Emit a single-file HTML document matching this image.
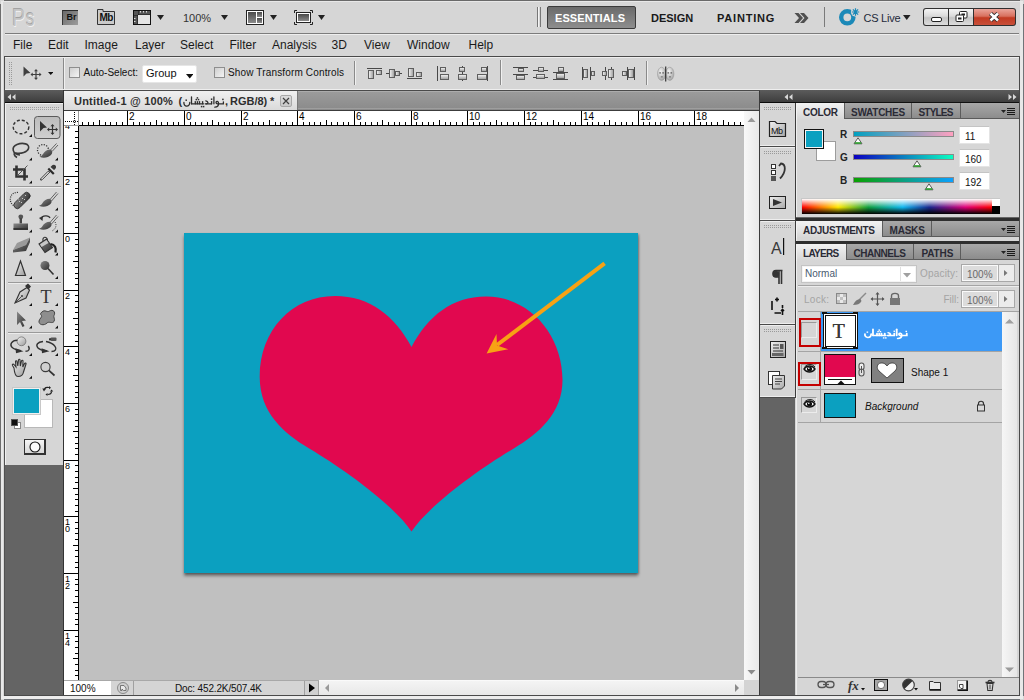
<!DOCTYPE html><html><head><meta charset="utf-8"><style>
*{margin:0;padding:0;box-sizing:border-box}
html,body{width:1024px;height:700px;overflow:hidden;background:#d6d6d6;position:relative;font-family:"Liberation Sans",sans-serif}
div,svg{position:absolute}
.t{white-space:nowrap;line-height:1}
</style></head><body>
<div style="left:0px;top:0px;width:1024px;height:700px;background:#d6d6d6"></div>
<div style="left:4px;top:0px;width:1016px;height:1px;background:#6a6a6a"></div>
<div style="left:0px;top:4px;width:1px;height:696px;background:#6e6e6e"></div>
<div style="left:1023px;top:4px;width:1px;height:692px;background:#707478"></div>
<div style="left:4px;top:699px;width:1016px;height:1px;background:#707478"></div>
<div style="left:1px;top:1px;width:1022px;height:1px;background:#e8e8e8"></div>
<div style="left:1px;top:1px;width:2px;height:698px;background:#e8e8e8"></div>
<div style="left:1020px;top:1px;width:3px;height:698px;background:#e8e8e8"></div>
<div style="left:1px;top:696px;width:1022px;height:3px;background:#ececec"></div>
<div class="t" style="left:12.3px;top:7.4px;font-size:23px;transform:scaleX(0.86);color:#c4c4c4;text-shadow:-0.6px -0.6px 0 #a2a2a2,0.6px 0.8px 0 #f2f2f2;transform-origin:0 0">P</div>
<div class="t" style="left:26.3px;top:6.3px;font-size:24px;transform:scaleX(0.7);color:#c4c4c4;text-shadow:-0.6px -0.6px 0 #a2a2a2,0.6px 0.8px 0 #f2f2f2;transform-origin:0 0">s</div>
<div style="left:62px;top:10px;width:16px;height:15px;background:linear-gradient(135deg,#6a6a6a,#9c9c9c);border-top:1px solid #2a2a2a;border-left:1px solid #3a3a3a"></div>
<div class="t" style="left:66.5px;top:13.33px;font-size:9px;font-weight:bold;color:#111">Br</div>
<svg style="left:96px;top:8px" width="20" height="18"><path d="M1.5 16.5 V1.5 H7 V3.5 H18.5 V16.5 Z" fill="#cacaca" stroke="#333" stroke-width="1"/></svg>
<div class="t" style="left:99.5px;top:12.70px;font-size:10px;font-weight:bold;color:#111;letter-spacing:-0.6px">Mb</div>
<svg style="left:133px;top:10px" width="18" height="15"><rect x="0" y="0" width="18" height="15" fill="#111"/><rect x="1" y="1" width="4" height="4" fill="#555"/><rect x="5.5" y="1" width="11.5" height="3.5" fill="#555"/><rect x="1" y="5.5" width="3.5" height="8.5" fill="#555"/><rect x="5" y="5" width="12" height="9" fill="#e4e4e4"/>
<rect x="7" y="1" width="1" height="1.5" fill="#ddd"/><rect x="10" y="1" width="1" height="1.5" fill="#ddd"/><rect x="13" y="1" width="1" height="1.5" fill="#ddd"/><rect x="1" y="8" width="1.5" height="1" fill="#ddd"/><rect x="1" y="11" width="1.5" height="1" fill="#ddd"/></svg>
<svg style="left:157px;top:15px" width="7" height="5"><path d="M0 0 H7 L3.5 5 Z" fill="#222"/></svg>
<div class="t" style="left:183px;top:12.57px;font-size:11px;color:#333">100%</div>
<svg style="left:220.5px;top:15px" width="7" height="5"><path d="M0 0 H7 L3.5 5 Z" fill="#222"/></svg>
<svg style="left:246px;top:10px" width="18" height="15"><rect x="0.5" y="0.5" width="17" height="14" fill="#fff" stroke="#222"/><defs><linearGradient id="g1" x1="0" y1="0" x2="0" y2="1"><stop offset="0" stop-color="#4a4a4a"/><stop offset="1" stop-color="#8a8a8a"/></linearGradient></defs><rect x="2" y="2" width="8" height="11" fill="url(#g1)"/><rect x="11" y="2" width="5" height="5" fill="url(#g1)"/><rect x="11" y="8" width="5" height="5" fill="url(#g1)"/></svg>
<svg style="left:270px;top:15px" width="7" height="5"><path d="M0 0 H7 L3.5 5 Z" fill="#222"/></svg>
<svg style="left:294px;top:10px" width="19" height="15"><path d="M0.5 3 V0.5 H3 M16 0.5 H18.5 V3 M18.5 12 V14.5 H16 M3 14.5 H0.5 V12" fill="none" stroke="#222" stroke-width="1"/><rect x="2.5" y="2.5" width="14" height="10" fill="#fff" stroke="#222"/><rect x="4" y="4" width="11" height="7" fill="url(#g1)"/></svg>
<svg style="left:318px;top:15px" width="7" height="5"><path d="M0 0 H7 L3.5 5 Z" fill="#222"/></svg>
<div style="left:537px;top:7px;width:1px;height:20px;background:#777"></div>
<div style="left:538px;top:7px;width:1px;height:20px;background:#f4f4f4"></div>
<div style="left:540px;top:7px;width:1px;height:20px;background:#777"></div>
<div style="left:547px;top:6px;width:89px;height:23px;background:linear-gradient(#6a6a6a,#8e8e8e);border:1px solid #3a3a3a;border-radius:2px"></div>
<div class="t" style="left:555px;top:12.57px;font-size:11px;font-weight:bold;color:#fff;letter-spacing:0.1px">ESSENTIALS</div>
<div class="t" style="left:651px;top:12.57px;font-size:11px;font-weight:bold;color:#1a1a1a">DESIGN</div>
<div class="t" style="left:717px;top:12.57px;font-size:11px;font-weight:bold;color:#1a1a1a;letter-spacing:0.8px">PAINTING</div>
<svg style="left:794px;top:13px" width="16" height="11"><path d="M0.5 0 H4.5 L9 5 L4.5 10 H0.5 L5 5 Z M6 0 H10 L14.5 5 L10 10 H6 L10.5 5 Z" fill="#505050"/></svg>
<div style="left:824px;top:7px;width:1px;height:20px;background:#7a7a7a"></div>
<svg style="left:836px;top:6px" width="24" height="22"><circle cx="11.3" cy="11.3" r="6.1" fill="none" stroke="#1b89b8" stroke-width="4.4"/><circle cx="19.5" cy="6" r="4.6" fill="#d6d6d6"/><g stroke="#1b89b8" stroke-width="1.2"><path d="M19.5 2.3 V9.7 M15.8 6 H23.2 M16.9 3.4 L22.1 8.6 M22.1 3.4 L16.9 8.6"/></g></svg>
<div class="t" style="left:863.5px;top:12.57px;font-size:11px;color:#1e2a3a;letter-spacing:-0.25px">CS Live</div>
<svg style="left:903px;top:15px" width="7.5" height="5"><path d="M0 0 H7.5 L3.75 5 Z" fill="#222"/></svg>
<div style="left:923px;top:8px;width:93px;height:18px;background:#303030;border-radius:3px"></div>
<div style="left:924px;top:9px;width:24px;height:16px;background:linear-gradient(#f4f4f4,#dadada 45%,#c4c4c4 55%,#dcdcdc);border-radius:2px 0 0 2px"></div>
<div style="left:949px;top:9px;width:24px;height:16px;background:linear-gradient(#f4f4f4,#dadada 45%,#c4c4c4 55%,#dcdcdc)"></div>
<div style="left:974px;top:9px;width:41px;height:16px;background:linear-gradient(#eaa49a,#d8705e 45%,#c23a22 55%,#c8503a);border-radius:0 2px 2px 0"></div>
<div style="left:930.5px;top:17px;width:11px;height:5px;background:#fff;border:1px solid #222;border-radius:2px"></div>
<svg style="left:955px;top:11px" width="14" height="12"><rect x="4.5" y="0.5" width="7.5" height="6.5" fill="#fff" stroke="#222" rx="1"/><rect x="6.5" y="2.5" width="3.5" height="2" fill="#222"/><rect x="1" y="4" width="7.5" height="6.5" fill="#fff" stroke="#222" rx="1"/><rect x="3" y="6.5" width="3.5" height="2" fill="#222"/></svg>
<svg style="left:986px;top:10px" width="16" height="14"><path d="M4.5 3.5 L12 10.5 M12 3.5 L4.5 10.5" stroke="#2a2a2a" stroke-width="4.4" stroke-linecap="butt"/><path d="M4.5 3.5 L12 10.5 M12 3.5 L4.5 10.5" stroke="#fff" stroke-width="2.6" stroke-linecap="butt"/></svg>
<div style="left:5px;top:33px;width:1014px;height:1px;background:#7c7c7c"></div>
<div style="left:5px;top:34px;width:1014px;height:1px;background:#eeeeee"></div>
<div class="t" style="left:13px;top:38.74px;font-size:12px;color:#1a1a1a">File</div>
<div class="t" style="left:48px;top:38.74px;font-size:12px;color:#1a1a1a">Edit</div>
<div class="t" style="left:84.5px;top:38.74px;font-size:12px;color:#1a1a1a">Image</div>
<div class="t" style="left:135px;top:38.74px;font-size:12px;color:#1a1a1a">Layer</div>
<div class="t" style="left:180px;top:38.74px;font-size:12px;color:#1a1a1a">Select</div>
<div class="t" style="left:229.5px;top:38.74px;font-size:12px;color:#1a1a1a">Filter</div>
<div class="t" style="left:272px;top:38.74px;font-size:12px;color:#1a1a1a">Analysis</div>
<div class="t" style="left:331.5px;top:38.74px;font-size:12px;color:#1a1a1a">3D</div>
<div class="t" style="left:364px;top:38.74px;font-size:12px;color:#1a1a1a">View</div>
<div class="t" style="left:407px;top:38.74px;font-size:12px;color:#1a1a1a">Window</div>
<div class="t" style="left:468.5px;top:38.74px;font-size:12px;color:#1a1a1a">Help</div>
<div style="left:4px;top:56px;width:1016px;height:35px;background:#d6d6d6;border:1px solid #4a4a4a;border-right-color:#4a4a4a"></div>
<div style="left:5px;top:57px;width:1014px;height:1px;background:#eeeeee"></div>
<div style="left:5px;top:89px;width:1014px;height:1px;background:#eeeeee"></div>
<svg style="left:9px;top:62px" width="4" height="24"><defs><pattern id="p9_62" width="2" height="2" patternUnits="userSpaceOnUse"><rect width="1" height="1" fill="#9a9a9a"/></pattern></defs><rect width="4" height="24" fill="url(#p9_62)"/></svg>
<svg style="left:22.5px;top:66px" width="20" height="15"><path d="M0.5 0.5 L7.5 7 L3.5 7.5 L0.5 10.5 Z" fill="#404040"/><path d="M13 4 V13 M8.5 8.5 H17.5" stroke="#404040" stroke-width="1.2"/><path d="M13 3 L11 5.2 H15 Z M13 14 L11 11.8 H15 Z M7.5 8.5 L9.7 6.5 V10.5 Z M18.5 8.5 L16.3 6.5 V10.5 Z" fill="#404040"/></svg>
<svg style="left:47.5px;top:72px" width="5.5" height="3"><path d="M0 0 H5.5 L2.75 3 Z" fill="#111"/></svg>
<div style="left:63px;top:58px;width:1px;height:31px;background:#8a8a8a"></div>
<div style="left:64px;top:58px;width:1px;height:31px;background:#f0f0f0"></div>
<div style="left:69px;top:67px;width:11px;height:11px;background:linear-gradient(135deg,#cfcfcf,#f4f4f4);border:1px solid #8e8e8e"></div>
<div class="t" style="left:83.5px;top:68.10px;font-size:10px;color:#111">Auto-Select:</div>
<div style="left:142px;top:65px;width:55px;height:18px;background:#fff;border:1px solid #e6e6e6;border-radius:2px"></div>
<div class="t" style="left:146px;top:67.57px;font-size:11px;color:#111">Group</div>
<svg style="left:185.5px;top:74px" width="7.5" height="4.5"><path d="M0 0 H7.5 L3.75 4.5 Z" fill="#111"/></svg>
<div style="left:214px;top:67px;width:11px;height:11px;background:linear-gradient(135deg,#cfcfcf,#f4f4f4);border:1px solid #8e8e8e"></div>
<div class="t" style="left:228px;top:68.10px;font-size:10px;color:#111;letter-spacing:0.15px">Show Transform Controls</div>
<div style="left:354px;top:61px;width:1px;height:24px;background:#8a8a8a"></div>
<div style="left:355px;top:61px;width:1px;height:24px;background:#f0f0f0"></div>
<div style="left:500px;top:60px;width:1px;height:25px;background:#8a8a8a"></div>
<div style="left:501px;top:60px;width:1px;height:25px;background:#f0f0f0"></div>
<div style="left:646px;top:61px;width:1px;height:24px;background:#8a8a8a"></div>
<div style="left:647px;top:61px;width:1px;height:24px;background:#f0f0f0"></div>
<div style="left:367px;top:68px;width:15px;height:1px;background:#484848"></div><div style="left:368px;top:70px;width:6px;height:9px;background:linear-gradient(90deg,#eeeeee,#a4a4a4);border:1px solid #5e5e5e"></div><div style="left:376px;top:70px;width:6px;height:5px;background:linear-gradient(90deg,#eeeeee,#a4a4a4);border:1px solid #5e5e5e"></div><div style="left:386px;top:73px;width:16px;height:1px;background:#484848"></div><div style="left:389px;top:69px;width:6px;height:9px;background:linear-gradient(90deg,#eeeeee,#a4a4a4);border:1px solid #5e5e5e"></div><div style="left:395px;top:71px;width:5px;height:5px;background:linear-gradient(90deg,#eeeeee,#a4a4a4);border:1px solid #5e5e5e"></div><div style="left:407px;top:78px;width:15px;height:1px;background:#484848"></div><div style="left:408px;top:68px;width:6px;height:9px;background:linear-gradient(90deg,#eeeeee,#a4a4a4);border:1px solid #5e5e5e"></div><div style="left:416px;top:72px;width:6px;height:5px;background:linear-gradient(90deg,#eeeeee,#a4a4a4);border:1px solid #5e5e5e"></div><div style="left:437px;top:66px;width:1px;height:15px;background:#484848"></div><div style="left:440px;top:67px;width:6px;height:5px;background:linear-gradient(#eeeeee,#a4a4a4);border:1px solid #5e5e5e"></div><div style="left:440px;top:74px;width:9px;height:6px;background:linear-gradient(#eeeeee,#a4a4a4);border:1px solid #5e5e5e"></div><div style="left:462px;top:66px;width:1px;height:15px;background:#484848"></div><div style="left:459px;top:67px;width:6px;height:5px;background:linear-gradient(#eeeeee,#a4a4a4);border:1px solid #5e5e5e"></div><div style="left:458px;top:74px;width:9px;height:6px;background:linear-gradient(#eeeeee,#a4a4a4);border:1px solid #5e5e5e"></div><div style="left:487px;top:66px;width:1px;height:15px;background:#484848"></div><div style="left:481px;top:67px;width:6px;height:5px;background:linear-gradient(#eeeeee,#a4a4a4);border:1px solid #5e5e5e"></div><div style="left:477px;top:74px;width:10px;height:6px;background:linear-gradient(#eeeeee,#a4a4a4);border:1px solid #5e5e5e"></div><div style="left:513px;top:67px;width:15px;height:1px;background:#484848"></div><div style="left:513px;top:74px;width:15px;height:1px;background:#484848"></div><div style="left:518px;top:68px;width:6px;height:4px;background:linear-gradient(#eeeeee,#a4a4a4);border:1px solid #5e5e5e"></div><div style="left:516px;top:75px;width:9px;height:5px;background:linear-gradient(#eeeeee,#a4a4a4);border:1px solid #5e5e5e"></div><div style="left:533px;top:69.5px;width:15px;height:1px;background:#484848"></div><div style="left:533px;top:76.5px;width:15px;height:1px;background:#484848"></div><div style="left:538px;top:67px;width:6px;height:5px;background:linear-gradient(#eeeeee,#a4a4a4);border:1px solid #5e5e5e"></div><div style="left:536px;top:74px;width:9px;height:5px;background:linear-gradient(#eeeeee,#a4a4a4);border:1px solid #5e5e5e"></div><div style="left:553px;top:72px;width:15px;height:1px;background:#484848"></div><div style="left:553px;top:79px;width:15px;height:1px;background:#484848"></div><div style="left:558px;top:67px;width:6px;height:5px;background:linear-gradient(#eeeeee,#a4a4a4);border:1px solid #5e5e5e"></div><div style="left:556px;top:73px;width:9px;height:6px;background:linear-gradient(#eeeeee,#a4a4a4);border:1px solid #5e5e5e"></div><div style="left:582px;top:67px;width:1px;height:13px;background:#484848"></div><div style="left:590px;top:67px;width:1px;height:13px;background:#484848"></div><div style="left:583px;top:69px;width:5px;height:9px;background:linear-gradient(90deg,#eeeeee,#a4a4a4);border:1px solid #5e5e5e"></div><div style="left:591px;top:71px;width:4px;height:5px;background:linear-gradient(90deg,#eeeeee,#a4a4a4);border:1px solid #5e5e5e"></div><div style="left:605px;top:67px;width:1px;height:13px;background:#484848"></div><div style="left:611px;top:67px;width:1px;height:13px;background:#484848"></div><div style="left:602px;top:71px;width:5px;height:5px;background:linear-gradient(90deg,#eeeeee,#a4a4a4);border:1px solid #5e5e5e"></div><div style="left:608px;top:69px;width:6px;height:9px;background:linear-gradient(90deg,#eeeeee,#a4a4a4);border:1px solid #5e5e5e"></div><div style="left:627px;top:67px;width:1px;height:13px;background:#484848"></div><div style="left:634px;top:67px;width:1px;height:13px;background:#484848"></div><div style="left:622px;top:71px;width:5px;height:5px;background:linear-gradient(90deg,#eeeeee,#a4a4a4);border:1px solid #5e5e5e"></div><div style="left:628px;top:69px;width:6px;height:9px;background:linear-gradient(90deg,#eeeeee,#a4a4a4);border:1px solid #5e5e5e"></div>
<svg style="left:657px;top:66px" width="18" height="16"><defs><radialGradient id="fg" cx="0.4" cy="0.35" r="0.7"><stop offset="0" stop-color="#f4f4f4"/><stop offset="1" stop-color="#a0a0a0"/></radialGradient></defs><ellipse cx="4.6" cy="7.8" rx="4.1" ry="6.6" fill="url(#fg)" stroke="#9a9a9a" stroke-width="0.6"/><ellipse cx="12.8" cy="7.8" rx="4.1" ry="6.6" fill="url(#fg)" stroke="#9a9a9a" stroke-width="0.6"/><g fill="#555"><rect x="2.3" y="6.3" width="1.6" height="1.2"/><rect x="5.3" y="6.3" width="1.6" height="1.2"/><rect x="10.5" y="6.3" width="1.6" height="1.2"/><rect x="13.5" y="6.3" width="1.6" height="1.2"/><rect x="3.8" y="10.5" width="2" height="0.8"/><rect x="12" y="10.5" width="2" height="0.8"/></g><path d="M8.7 0.5 V15.5" stroke="#333" stroke-width="1.2"/></svg>
<div style="left:5px;top:90px;width:58px;height:13px;background:linear-gradient(#5c5c5c,#3e3e3e);border-bottom:1px solid #0a0a0a"></div>
<div style="left:760px;top:90px;width:259px;height:13px;background:linear-gradient(#5c5c5c,#3e3e3e);border-bottom:1px solid #0a0a0a"></div>
<div style="left:5px;top:103px;width:58px;height:362px;background:#d6d6d6;border-left:1px solid #f0f0f0;border-top:1px solid #f0f0f0"></div>
<div style="left:4px;top:90px;width:1px;height:606px;background:#505050"></div>
<div style="left:5px;top:465px;width:58px;height:230px;background:#646464"></div>
<svg style="left:10px;top:107px" width="50" height="4"><defs><pattern id="p10_107" width="2" height="2" patternUnits="userSpaceOnUse"><rect width="1" height="1" fill="#a0a0a0"/></pattern></defs><rect width="50" height="4" fill="url(#p10_107)"/></svg>
<div style="left:8px;top:186px;width:53px;height:1px;background:#9a9a9a"></div>
<div style="left:8px;top:187px;width:53px;height:1px;background:#ececec"></div>
<div style="left:8px;top:282px;width:53px;height:1px;background:#9a9a9a"></div>
<div style="left:8px;top:283px;width:53px;height:1px;background:#ececec"></div>
<div style="left:8px;top:332px;width:53px;height:1px;background:#9a9a9a"></div>
<div style="left:8px;top:333px;width:53px;height:1px;background:#ececec"></div>
<svg style="left:0;top:100px" width="64" height="370" viewBox="0 100 64 370">
<defs>
<linearGradient id="tg" x1="0" y1="0" x2="1" y2="1"><stop offset="0" stop-color="#8a8a8a"/><stop offset="1" stop-color="#2e2e2e"/></linearGradient>
<linearGradient id="tgl" x1="0" y1="0" x2="1" y2="1"><stop offset="0" stop-color="#f4f4f4"/><stop offset="1" stop-color="#9a9a9a"/></linearGradient>
<linearGradient id="btn" x1="0" y1="0" x2="0" y2="1"><stop offset="0" stop-color="#bcbcbc"/><stop offset="1" stop-color="#cfcfcf"/></linearGradient>
</defs>
<rect x="34.5" y="116.5" width="25.5" height="22" rx="3" fill="url(#btn)" stroke="#5a5a5a" stroke-width="1"/>
<path d="M40 121 L47 127.5 L43.5 128 L40 131.5 Z" fill="#333"/>
<path d="M52.5 125 V134 M48 129.5 H57" stroke="#333" stroke-width="1.2"/>
<path d="M52.5 124 L50.5 126.2 H54.5 Z M52.5 135 L50.5 132.8 H54.5 Z M47 129.5 L49.2 127.5 V131.5 Z M58 129.5 L55.8 127.5 V131.5 Z" fill="#333"/>
<ellipse cx="21" cy="127" rx="7.8" ry="6.8" fill="none" stroke="#333" stroke-width="1.4" stroke-dasharray="3 2"/>
<path d="M20 155 C12 154 11 147 17 144.5 C23 142 30 144 28.5 148.5 C27.5 152 21 154 16 153 C13 152.5 14 156 17 157.5" fill="none" stroke="#3a3a3a" stroke-width="1.6"/>
<circle cx="43" cy="150" r="5.5" fill="none" stroke="#333" stroke-width="1.3" stroke-dasharray="1.2 1.4"/>
<path d="M56.5 143.5 L50.5 150 M58 145 L52 151.5" stroke="#555" stroke-width="0.9"/><path d="M50.5 149.5 C47 149.5 44.5 151.5 43 154 C42.3 155.3 41 156.3 39.5 156.8 C43.5 158.5 48.5 157.5 51 155 C52.8 153.2 52.7 150.5 50.5 149.5 Z" fill="url(#tg)"/>
<path d="M16.5 165.5 V176.5 H28 M13 169.5 H24.5 V180.5" fill="none" stroke="#333" stroke-width="2.6"/>
<path d="M17 176 L27.5 165.5" stroke="#555" stroke-width="1"/>
<path d="M51.5 166 C53 164 56.5 164.5 56 167.5 C55.8 168.5 55 169.3 54 170 L50.5 167 Z" fill="#3a3a3a"/><path d="M48.3 168.5 L53.8 174" stroke="#2a2a2a" stroke-width="2.2"/><path d="M49.8 172 L42 179.8 L40.8 180.2 L40.5 179 L48.2 171.2 Z" fill="#fafafa" stroke="#333" stroke-width="1"/>
<path d="M18 192.5 C12 192 9.5 197 10.5 201 C11 203 12 204.5 13.5 205.5" fill="none" stroke="#333" stroke-width="1.2" stroke-dasharray="1 1.2"/>
<rect x="12" y="197" width="20" height="7" rx="3.5" transform="rotate(-45 22 200.5)" fill="url(#tg)" stroke="#2a2a2a" stroke-width="0.8"/><g fill="#c8c8c8"><rect x="19" y="201" width="1" height="1"/><rect x="22" y="198" width="1" height="1"/><rect x="25" y="195" width="1" height="1"/><rect x="21" y="202" width="1" height="1"/><rect x="24" y="199" width="1" height="1"/><rect x="18" y="198.5" width="1" height="1"/></g>
<path d="M56.5 192 L50 199.5 M58 193.5 L51.5 201" stroke="#555" stroke-width="0.9"/><path d="M49.8 198.8 C46.5 198.8 44 200.5 42.5 203 C41.8 204.3 40.5 205.3 39 205.8 C43 207.5 48 206.5 50.5 204 C52.3 202.2 52 199.8 49.8 198.8 Z" fill="url(#tg)"/>
<circle cx="20.8" cy="216.8" r="2.4" fill="#555"/><rect x="19.6" y="218" width="2.4" height="5.5" fill="#444"/><path d="M13.5 223.5 H28 V229 C28 229.6 27.6 230 27 230 H14.5 C13.9 230 13.5 229.6 13.5 229 Z" fill="url(#tg)"/><rect x="13.5" y="228" width="14.5" height="2" fill="#333"/>
<path d="M41 219 C42 215 49 215 50 218" fill="none" stroke="#333" stroke-width="1.3"/><path d="M39 218 L43 216 L42.5 221 Z" fill="#333"/>
<path d="M56.5 215 L50 222.5 M58 216.5 L51.5 224" stroke="#555" stroke-width="0.9"/><path d="M49.8 221.8 C46.5 221.8 44 223.5 42.5 226 C41.8 227.3 40.5 228.3 39 228.8 C43 230.5 48 229.5 50.5 227 C52.3 225.2 52 222.8 49.8 221.8 Z" fill="url(#tg)"/>
<path d="M55 222 C57 225 56 229 52 231" fill="none" stroke="#333" stroke-width="1" stroke-dasharray="1 1.3"/>
<path d="M13 250 L17 243 L30 237.5 L26 245 Z" fill="#9a9a9a"/><path d="M13 250 L26 245 L30 237.5 L30 242 L26 251 L13 252.5 Z" fill="url(#tg)"/>
<path d="M39 244 L46.5 239 L52.5 247.5 L45 252.5 Z" fill="url(#tg)" stroke="#333" stroke-width="1.1"/><path d="M40 244.3 L46.5 240 L48.5 243 L41.5 247 Z" fill="#c8c8c8"/>
<path d="M43 241 C42 236.5 47 236 47.5 240" fill="none" stroke="#333" stroke-width="1.1"/>
<path d="M50.5 244 C55 244.5 56.5 248 55.5 252.5" fill="none" stroke="#222" stroke-width="2.2"/>
<path d="M20.5 261 L15.5 275.5 H25.5 Z" fill="url(#tgl)" stroke="#333" stroke-width="1.2"/>
<circle cx="45" cy="265.5" r="4.5" fill="url(#tg)"/><path d="M48 268.5 L53.5 274.5" stroke="#333" stroke-width="1.6"/>
<path d="M27 287.5 L29.5 290 L26 298 L15 303 L20 292 Z" fill="url(#tgl)" stroke="#333" stroke-width="1.1"/>
<path d="M25 286 L28 283.5 L31 286.5 L28.5 289.5 Z" fill="#333"/><path d="M15.5 302.5 L21.5 296.5" stroke="#333" stroke-width="0.8"/><circle cx="22" cy="296" r="0.9" fill="#333"/>
<text x="40.5" y="302.5" font-family="Liberation Serif" font-size="18" fill="#333">T</text>
<path d="M17 311.5 L26 320.5 L22 321 L24.5 326 L22.5 327 L20 322 L17 325 Z" fill="url(#tg)"/>
<path d="M42 312 C45 309 47 313 49.5 311 C53 309 56 312 54 315.5 C53 317 55.5 319 54 321.5 C52 324 49 321 47 323 C44 326 38.5 325 39 321 C39.5 318.5 42.5 317 41.5 315.5 C40 314 40.5 313 42 312 Z" fill="#8e8e8e" stroke="#444" stroke-width="1"/>
<circle cx="21.5" cy="341.3" r="4.4" fill="url(#tgl)" stroke="#666" stroke-width="0.7"/>
<path d="M17.3 340.3 C11.5 340.5 9.5 344.5 12 347.3 C14 349.3 17 350.3 21 350.8 M25.5 351.3 C29 351.3 30.2 348.8 28.3 346" fill="none" stroke="#333" stroke-width="1.4"/><path d="M15.5 348.3 L23.5 351.2 L16 353.3 Z" fill="#333"/>
<path d="M43 341.5 C37.5 342 35.5 345 37.8 347.8 C39.5 349.7 43 350.7 47 351 M51.5 351.5 C55.5 351.3 57 349 55 346.3 C53.3 344 50 342.3 46 341.5" fill="none" stroke="#333" stroke-width="1.4"/><path d="M41.5 348.3 L49.5 351.2 L42 353.3 Z" fill="#333"/>
<rect x="50.5" y="337.5" width="6" height="3.5" rx="1" fill="#555"/><rect x="49" y="338.3" width="2" height="2" fill="#333"/>
<path d="M14 368 L12.5 365.5 C12 364.5 13 363.5 14 364.5 L16 367 L15.5 361.5 C15.5 360.5 17 360.5 17 361.5 L17.8 366 L18.5 360 C18.7 359 20 359 20 360 L20.3 366 L21.5 361 C21.7 360 23 360 23 361 L22.8 367 L24.5 363.5 C25 362.5 26.5 363 26 364 L23.5 372 C23 375 21 376.5 18 376.5 C15.5 376.5 14.5 374 14 368 Z" fill="url(#tgl)" stroke="#333" stroke-width="1.1"/>
<circle cx="45.5" cy="367" r="4.6" fill="#d0d0d0" stroke="#3a3a3a" stroke-width="1.1"/><path d="M48.8 370.3 L54.5 375.5" stroke="#333" stroke-width="1.7"/>
<path d="M32 134 V137 H29 Z" fill="#111"/><path d="M32 157.5 V160.5 H29 Z" fill="#111"/><path d="M58 157.5 V160.5 H55 Z" fill="#111"/><path d="M32 180.5 V183.5 H29 Z" fill="#111"/><path d="M58 180.5 V183.5 H55 Z" fill="#111"/><path d="M32 207.5 V210.5 H29 Z" fill="#111"/><path d="M58 207.5 V210.5 H55 Z" fill="#111"/><path d="M32 229.5 V232.5 H29 Z" fill="#111"/><path d="M58 229.5 V232.5 H55 Z" fill="#111"/><path d="M32 252.5 V255.5 H29 Z" fill="#111"/><path d="M58 252.5 V255.5 H55 Z" fill="#111"/><path d="M32 276 V279 H29 Z" fill="#111"/><path d="M58 276 V279 H55 Z" fill="#111"/><path d="M32 303 V306 H29 Z" fill="#111"/><path d="M58 303 V306 H55 Z" fill="#111"/><path d="M32 325.5 V328.5 H29 Z" fill="#111"/><path d="M58 325.5 V328.5 H55 Z" fill="#111"/><path d="M32 353 V356 H29 Z" fill="#111"/><path d="M58 353 V356 H55 Z" fill="#111"/><path d="M32 375.7 V378.7 H29 Z" fill="#111"/></svg>
<div style="left:24px;top:399px;width:29px;height:29px;background:#fff;border:1px solid #b8b8b8"></div>
<div style="left:13px;top:388px;width:27px;height:26px;background:#0ba0c0;border:1px solid #f0f0f0;box-shadow:0 0 0 1px #c8c8c8"></div>
<svg style="left:42px;top:385px" width="12" height="12"><path d="M2.5 5 C2.5 2.5 4.5 2 7 2.5" fill="none" stroke="#222" stroke-width="1.2"/><path d="M2 6.5 L0.3 3.5 H4 Z" fill="#222"/><path d="M7 1 L9 2.7 L7 4.3 Z" fill="#222"/><path d="M9.5 6.5 C9.5 9 8 9.5 5.5 9.5" fill="none" stroke="#222" stroke-width="1.2"/><path d="M8 6.5 H11.2 L9.6 4.5 Z" fill="#222"/><path d="M5.5 8 L3.5 9.5 L5.5 11 Z" fill="#222"/></svg>
<div style="left:14px;top:422px;width:7px;height:7px;background:#fff;border:1px solid #888"></div>
<div style="left:11px;top:419px;width:7px;height:7px;background:#111;border:1px solid #555"></div>
<div style="left:24px;top:439px;width:22px;height:16px;background:linear-gradient(#f6f6f6,#d8d8d8);border:1px solid #333;border-right-width:2px;border-bottom-width:2px"></div>
<svg style="left:29px;top:441px" width="12" height="12"><circle cx="6" cy="6" r="5" fill="#fafafa" stroke="#111" stroke-width="1.1"/></svg>
<div style="left:63px;top:90px;width:1px;height:605px;background:#333"></div>
<div style="left:64px;top:91px;width:695px;height:19px;background:linear-gradient(#9c9c9c,#8a8a8a)"></div>
<div style="left:64px;top:91px;width:233px;height:19px;background:linear-gradient(#f0f0f0,#dadada)"></div>
<div style="left:297px;top:91px;width:1px;height:19px;background:#7a7a7a"></div>
<div style="left:298px;top:91px;width:461px;height:1px;background:#acacac"></div>
<div style="left:298px;top:108px;width:461px;height:1px;background:#9e9e9e"></div>
<div class="t" style="left:74px;top:96px;font-weight:bold;font-size:11px;color:#2e2e2e;letter-spacing:0.2px">Untitled-1 @ 100%</div>
<div class="t" style="left:178.5px;top:96px;font-weight:bold;font-size:11px;color:#2e2e2e">(</div>
<div class="t" style="left:225px;top:96px;font-weight:bold;font-size:11px;color:#2e2e2e">,</div>
<div class="t" style="left:230px;top:96px;font-weight:bold;font-size:11px;color:#2e2e2e">RGB/8)</div>
<div class="t" style="left:270px;top:96px;font-weight:bold;font-size:11px;color:#2e2e2e">*</div>
<svg style="left:180px;top:93px" width="48" height="16" viewBox="180 93 48 16"><g transform="translate(0 0) scale(1 1)" fill="none" stroke="#2e2e2e" stroke-width="1.3" stroke-linecap="round"><path d="M183.9 102.3 C183.4 107.2 189.6 107.6 189.8 102.3"/><path d="M191.5 97 V103.8"/><path d="M191.5 103.8 H203.5"/><path d="M205.2 103.8 H211.6"/><path d="M195.3 101.6 V103.8"/><path d="M197.4 101.6 V103.8"/><path d="M199.5 101.6 V103.8"/><path d="M202.6 101.6 V103.8"/><path d="M205.8 100.8 C208.2 101.2 208.8 103.8 206.2 103.8"/><path d="M211.6 101.6 V103.8"/><path d="M213.9 97 V103.8"/><path d="M218.6 103.6 C218.8 101 216 100.6 216 102.6 C216 104.2 218.6 104.2 218.6 103.6 C218.6 106.2 216.6 107.2 214.8 107.2"/><path d="M218.8 103.8 H223.4 V101.8"/></g><g transform="translate(0 0) scale(1 1)" fill="#2e2e2e"><rect x="185.45" y="99.45" width="1.5" height="1.5"/><rect x="195.55" y="98.85" width="1.5" height="1.5"/><rect x="197.75" y="98.85" width="1.5" height="1.5"/><rect x="196.65" y="97.15" width="1.5" height="1.5"/><rect x="200.85" y="105.85" width="1.5" height="1.5"/><rect x="202.85" y="105.85" width="1.5" height="1.5"/><rect x="210.85" y="98.45" width="1.5" height="1.5"/><rect x="222.15" y="98.65" width="1.5" height="1.5"/></g></svg>
<div style="left:280px;top:95px;width:12px;height:12px;background:linear-gradient(#dcdcdc,#c8c8c8);border:1px solid #a8a8a8;border-radius:2px"></div>
<svg style="left:280px;top:95px" width="12" height="12"><path d="M3 3 L9 9 M9 3 L3 9" stroke="#404040" stroke-width="1.2"/></svg>
<div style="left:64px;top:110px;width:695px;height:1px;background:#3c3c3c"></div>
<div style="left:64px;top:111px;width:680px;height:14px;background:#ffffff"></div>
<div style="left:64px;top:125px;width:680px;height:1px;background:#000"></div>
<div style="left:64px;top:111px;width:14px;height:569px;background:#ffffff"></div>
<div style="left:78px;top:111px;width:1px;height:569px;background:#000"></div>
<div style="left:79px;top:126px;width:665px;height:554px;background:#c0c0c0"></div>
<div style="left:744px;top:111px;width:15px;height:569px;background:linear-gradient(90deg,#f8f8f8,#e8e8e8)"></div>
<svg style="left:745px;top:114px" width="13" height="10"><path d="M2.5 8 L6.5 3.5 L10.5 8 Z" fill="#9a9a9a"/></svg>
<svg style="left:745px;top:668px" width="13" height="10"><path d="M2.5 2 L6.5 6.5 L10.5 2 Z" fill="#8a8a8a"/></svg>
<div style="left:64px;top:680px;width:695px;height:15px;background:#d4d4d4;border-top:1px solid #a8a8a8"></div>
<div style="left:64px;top:681px;width:47px;height:14px;background:#fff"></div>
<div class="t" style="left:70px;top:684px;font-size:10px;color:#111">100%</div>
<svg style="left:116px;top:681px" width="14" height="14"><circle cx="7" cy="7" r="5.5" fill="#cfcfcf" stroke="#8a8a8a" stroke-width="1"/><path d="M4.5 4.5 H8 L10 7 V9.5 H7.5 L6 8 V9.5 H4.5 Z" fill="#e8e8e8" stroke="#6a6a6a" stroke-width="0.9"/></svg>
<div style="left:133px;top:681px;width:1px;height:14px;background:#a0a0a0"></div>
<div class="t" style="left:175px;top:684px;font-size:10px;color:#111;letter-spacing:-0.15px">Doc: 452.2K/507.4K</div>
<div style="left:304px;top:681px;width:1px;height:14px;background:#a0a0a0"></div>
<div style="left:305px;top:681px;width:13px;height:14px;background:#d0d0d0"></div>
<svg style="left:305px;top:681px" width="14" height="14"><path d="M4 2.5 L10 7 L4 11.5 Z" fill="#000"/></svg>
<div style="left:318px;top:681px;width:1px;height:14px;background:#a0a0a0"></div>
<div style="left:319px;top:680px;width:425px;height:15px;background:linear-gradient(#f4f4f4,#e8e8e8);border-top:1px solid #fafafa"></div>
<svg style="left:322px;top:683px" width="10" height="10"><path d="M7 1 L3 5 L7 9 Z" fill="#9a9a9a"/></svg>
<svg style="left:732px;top:683px" width="10" height="10"><path d="M3 1 L7 5 L3 9 Z" fill="#8a8a8a"/></svg>
<div style="left:744px;top:680px;width:15px;height:15px;background:#d4d4d4"></div>
<div style="left:759px;top:91px;width:1px;height:604px;background:#3a3a3a"></div>
<div style="left:4px;top:695px;width:1016px;height:1px;background:#4a4a4a"></div>
<div style="left:79px;top:111px;width:665px;height:15px;overflow:hidden;background:#fff"><div style="left:3px;top:11px;width:1px;height:3px;background:#000"></div><div style="left:9px;top:11px;width:1px;height:3px;background:#000"></div><div style="left:14px;top:11px;width:1px;height:3px;background:#000"></div><div style="left:20px;top:9px;width:1px;height:5px;background:#000"></div><div style="left:26px;top:11px;width:1px;height:3px;background:#000"></div><div style="left:31px;top:11px;width:1px;height:3px;background:#000"></div><div style="left:37px;top:11px;width:1px;height:3px;background:#000"></div><div style="left:43px;top:11px;width:1px;height:3px;background:#000"></div><div style="left:48px;top:0px;width:1px;height:14px;background:#000"></div><div class="t" style="left:50px;top:1px;font-size:10px;color:#000">2</div><div style="left:54px;top:11px;width:1px;height:3px;background:#000"></div><div style="left:60px;top:11px;width:1px;height:3px;background:#000"></div><div style="left:65px;top:11px;width:1px;height:3px;background:#000"></div><div style="left:71px;top:11px;width:1px;height:3px;background:#000"></div><div style="left:77px;top:9px;width:1px;height:5px;background:#000"></div><div style="left:82px;top:11px;width:1px;height:3px;background:#000"></div><div style="left:88px;top:11px;width:1px;height:3px;background:#000"></div><div style="left:94px;top:11px;width:1px;height:3px;background:#000"></div><div style="left:99px;top:11px;width:1px;height:3px;background:#000"></div><div style="left:105px;top:0px;width:1px;height:14px;background:#000"></div><div class="t" style="left:107px;top:1px;font-size:10px;color:#000">0</div><div style="left:111px;top:11px;width:1px;height:3px;background:#000"></div><div style="left:116px;top:11px;width:1px;height:3px;background:#000"></div><div style="left:122px;top:11px;width:1px;height:3px;background:#000"></div><div style="left:128px;top:11px;width:1px;height:3px;background:#000"></div><div style="left:133px;top:9px;width:1px;height:5px;background:#000"></div><div style="left:139px;top:11px;width:1px;height:3px;background:#000"></div><div style="left:145px;top:11px;width:1px;height:3px;background:#000"></div><div style="left:150px;top:11px;width:1px;height:3px;background:#000"></div><div style="left:156px;top:11px;width:1px;height:3px;background:#000"></div><div style="left:162px;top:0px;width:1px;height:14px;background:#000"></div><div class="t" style="left:164px;top:1px;font-size:10px;color:#000">2</div><div style="left:167px;top:11px;width:1px;height:3px;background:#000"></div><div style="left:173px;top:11px;width:1px;height:3px;background:#000"></div><div style="left:179px;top:11px;width:1px;height:3px;background:#000"></div><div style="left:184px;top:11px;width:1px;height:3px;background:#000"></div><div style="left:190px;top:9px;width:1px;height:5px;background:#000"></div><div style="left:196px;top:11px;width:1px;height:3px;background:#000"></div><div style="left:201px;top:11px;width:1px;height:3px;background:#000"></div><div style="left:207px;top:11px;width:1px;height:3px;background:#000"></div><div style="left:213px;top:11px;width:1px;height:3px;background:#000"></div><div style="left:218px;top:0px;width:1px;height:14px;background:#000"></div><div class="t" style="left:220px;top:1px;font-size:10px;color:#000">4</div><div style="left:224px;top:11px;width:1px;height:3px;background:#000"></div><div style="left:230px;top:11px;width:1px;height:3px;background:#000"></div><div style="left:235px;top:11px;width:1px;height:3px;background:#000"></div><div style="left:241px;top:11px;width:1px;height:3px;background:#000"></div><div style="left:247px;top:9px;width:1px;height:5px;background:#000"></div><div style="left:252px;top:11px;width:1px;height:3px;background:#000"></div><div style="left:258px;top:11px;width:1px;height:3px;background:#000"></div><div style="left:264px;top:11px;width:1px;height:3px;background:#000"></div><div style="left:269px;top:11px;width:1px;height:3px;background:#000"></div><div style="left:275px;top:0px;width:1px;height:14px;background:#000"></div><div class="t" style="left:277px;top:1px;font-size:10px;color:#000">6</div><div style="left:281px;top:11px;width:1px;height:3px;background:#000"></div><div style="left:286px;top:11px;width:1px;height:3px;background:#000"></div><div style="left:292px;top:11px;width:1px;height:3px;background:#000"></div><div style="left:298px;top:11px;width:1px;height:3px;background:#000"></div><div style="left:303px;top:9px;width:1px;height:5px;background:#000"></div><div style="left:309px;top:11px;width:1px;height:3px;background:#000"></div><div style="left:315px;top:11px;width:1px;height:3px;background:#000"></div><div style="left:320px;top:11px;width:1px;height:3px;background:#000"></div><div style="left:326px;top:11px;width:1px;height:3px;background:#000"></div><div style="left:332px;top:0px;width:1px;height:14px;background:#000"></div><div class="t" style="left:334px;top:1px;font-size:10px;color:#000">8</div><div style="left:337px;top:11px;width:1px;height:3px;background:#000"></div><div style="left:343px;top:11px;width:1px;height:3px;background:#000"></div><div style="left:349px;top:11px;width:1px;height:3px;background:#000"></div><div style="left:354px;top:11px;width:1px;height:3px;background:#000"></div><div style="left:360px;top:9px;width:1px;height:5px;background:#000"></div><div style="left:366px;top:11px;width:1px;height:3px;background:#000"></div><div style="left:371px;top:11px;width:1px;height:3px;background:#000"></div><div style="left:377px;top:11px;width:1px;height:3px;background:#000"></div><div style="left:383px;top:11px;width:1px;height:3px;background:#000"></div><div style="left:388px;top:0px;width:1px;height:14px;background:#000"></div><div class="t" style="left:390px;top:1px;font-size:10px;color:#000">10</div><div style="left:394px;top:11px;width:1px;height:3px;background:#000"></div><div style="left:400px;top:11px;width:1px;height:3px;background:#000"></div><div style="left:405px;top:11px;width:1px;height:3px;background:#000"></div><div style="left:411px;top:11px;width:1px;height:3px;background:#000"></div><div style="left:417px;top:9px;width:1px;height:5px;background:#000"></div><div style="left:422px;top:11px;width:1px;height:3px;background:#000"></div><div style="left:428px;top:11px;width:1px;height:3px;background:#000"></div><div style="left:434px;top:11px;width:1px;height:3px;background:#000"></div><div style="left:439px;top:11px;width:1px;height:3px;background:#000"></div><div style="left:445px;top:0px;width:1px;height:14px;background:#000"></div><div class="t" style="left:447px;top:1px;font-size:10px;color:#000">12</div><div style="left:451px;top:11px;width:1px;height:3px;background:#000"></div><div style="left:456px;top:11px;width:1px;height:3px;background:#000"></div><div style="left:462px;top:11px;width:1px;height:3px;background:#000"></div><div style="left:468px;top:11px;width:1px;height:3px;background:#000"></div><div style="left:474px;top:9px;width:1px;height:5px;background:#000"></div><div style="left:479px;top:11px;width:1px;height:3px;background:#000"></div><div style="left:485px;top:11px;width:1px;height:3px;background:#000"></div><div style="left:491px;top:11px;width:1px;height:3px;background:#000"></div><div style="left:496px;top:11px;width:1px;height:3px;background:#000"></div><div style="left:502px;top:0px;width:1px;height:14px;background:#000"></div><div class="t" style="left:504px;top:1px;font-size:10px;color:#000">14</div><div style="left:508px;top:11px;width:1px;height:3px;background:#000"></div><div style="left:513px;top:11px;width:1px;height:3px;background:#000"></div><div style="left:519px;top:11px;width:1px;height:3px;background:#000"></div><div style="left:525px;top:11px;width:1px;height:3px;background:#000"></div><div style="left:530px;top:9px;width:1px;height:5px;background:#000"></div><div style="left:536px;top:11px;width:1px;height:3px;background:#000"></div><div style="left:542px;top:11px;width:1px;height:3px;background:#000"></div><div style="left:547px;top:11px;width:1px;height:3px;background:#000"></div><div style="left:553px;top:11px;width:1px;height:3px;background:#000"></div><div style="left:559px;top:0px;width:1px;height:14px;background:#000"></div><div class="t" style="left:561px;top:1px;font-size:10px;color:#000">16</div><div style="left:564px;top:11px;width:1px;height:3px;background:#000"></div><div style="left:570px;top:11px;width:1px;height:3px;background:#000"></div><div style="left:576px;top:11px;width:1px;height:3px;background:#000"></div><div style="left:581px;top:11px;width:1px;height:3px;background:#000"></div><div style="left:587px;top:9px;width:1px;height:5px;background:#000"></div><div style="left:593px;top:11px;width:1px;height:3px;background:#000"></div><div style="left:598px;top:11px;width:1px;height:3px;background:#000"></div><div style="left:604px;top:11px;width:1px;height:3px;background:#000"></div><div style="left:610px;top:11px;width:1px;height:3px;background:#000"></div><div style="left:615px;top:0px;width:1px;height:14px;background:#000"></div><div class="t" style="left:617px;top:1px;font-size:10px;color:#000">18</div><div style="left:621px;top:11px;width:1px;height:3px;background:#000"></div><div style="left:627px;top:11px;width:1px;height:3px;background:#000"></div><div style="left:632px;top:11px;width:1px;height:3px;background:#000"></div><div style="left:638px;top:11px;width:1px;height:3px;background:#000"></div><div style="left:644px;top:9px;width:1px;height:5px;background:#000"></div><div style="left:649px;top:11px;width:1px;height:3px;background:#000"></div><div style="left:655px;top:11px;width:1px;height:3px;background:#000"></div><div style="left:661px;top:11px;width:1px;height:3px;background:#000"></div><div style="left:666px;top:11px;width:1px;height:3px;background:#000"></div><div style="left:0px;top:14px;width:665px;height:1px;background:#000"></div></div>
<div style="left:64px;top:126px;width:15px;height:554px;overflow:hidden;background:#fff"><div style="left:11px;top:-18px;width:3px;height:1px;background:#000"></div><div style="left:11px;top:-12px;width:3px;height:1px;background:#000"></div><div style="left:0px;top:-6px;width:14px;height:1px;background:#000"></div><div class="t" style="left:1px;top:-3px;font-size:9px;line-height:7px;width:6px;word-break:break-all;white-space:normal;color:#000">4</div><div style="left:11px;top:-1px;width:3px;height:1px;background:#000"></div><div style="left:11px;top:5px;width:3px;height:1px;background:#000"></div><div style="left:11px;top:11px;width:3px;height:1px;background:#000"></div><div style="left:11px;top:16px;width:3px;height:1px;background:#000"></div><div style="left:9px;top:22px;width:5px;height:1px;background:#000"></div><div style="left:11px;top:28px;width:3px;height:1px;background:#000"></div><div style="left:11px;top:33px;width:3px;height:1px;background:#000"></div><div style="left:11px;top:39px;width:3px;height:1px;background:#000"></div><div style="left:11px;top:45px;width:3px;height:1px;background:#000"></div><div style="left:0px;top:50px;width:14px;height:1px;background:#000"></div><div class="t" style="left:1px;top:53px;font-size:9px;line-height:7px;width:6px;word-break:break-all;white-space:normal;color:#000">2</div><div style="left:11px;top:56px;width:3px;height:1px;background:#000"></div><div style="left:11px;top:62px;width:3px;height:1px;background:#000"></div><div style="left:11px;top:67px;width:3px;height:1px;background:#000"></div><div style="left:11px;top:73px;width:3px;height:1px;background:#000"></div><div style="left:9px;top:79px;width:5px;height:1px;background:#000"></div><div style="left:11px;top:84px;width:3px;height:1px;background:#000"></div><div style="left:11px;top:90px;width:3px;height:1px;background:#000"></div><div style="left:11px;top:96px;width:3px;height:1px;background:#000"></div><div style="left:11px;top:101px;width:3px;height:1px;background:#000"></div><div style="left:0px;top:107px;width:14px;height:1px;background:#000"></div><div class="t" style="left:1px;top:110px;font-size:9px;line-height:7px;width:6px;word-break:break-all;white-space:normal;color:#000">0</div><div style="left:11px;top:113px;width:3px;height:1px;background:#000"></div><div style="left:11px;top:118px;width:3px;height:1px;background:#000"></div><div style="left:11px;top:124px;width:3px;height:1px;background:#000"></div><div style="left:11px;top:130px;width:3px;height:1px;background:#000"></div><div style="left:9px;top:135px;width:5px;height:1px;background:#000"></div><div style="left:11px;top:141px;width:3px;height:1px;background:#000"></div><div style="left:11px;top:147px;width:3px;height:1px;background:#000"></div><div style="left:11px;top:152px;width:3px;height:1px;background:#000"></div><div style="left:11px;top:158px;width:3px;height:1px;background:#000"></div><div style="left:0px;top:164px;width:14px;height:1px;background:#000"></div><div class="t" style="left:1px;top:167px;font-size:9px;line-height:7px;width:6px;word-break:break-all;white-space:normal;color:#000">2</div><div style="left:11px;top:169px;width:3px;height:1px;background:#000"></div><div style="left:11px;top:175px;width:3px;height:1px;background:#000"></div><div style="left:11px;top:181px;width:3px;height:1px;background:#000"></div><div style="left:11px;top:186px;width:3px;height:1px;background:#000"></div><div style="left:9px;top:192px;width:5px;height:1px;background:#000"></div><div style="left:11px;top:198px;width:3px;height:1px;background:#000"></div><div style="left:11px;top:203px;width:3px;height:1px;background:#000"></div><div style="left:11px;top:209px;width:3px;height:1px;background:#000"></div><div style="left:11px;top:215px;width:3px;height:1px;background:#000"></div><div style="left:0px;top:220px;width:14px;height:1px;background:#000"></div><div class="t" style="left:1px;top:223px;font-size:9px;line-height:7px;width:6px;word-break:break-all;white-space:normal;color:#000">4</div><div style="left:11px;top:226px;width:3px;height:1px;background:#000"></div><div style="left:11px;top:232px;width:3px;height:1px;background:#000"></div><div style="left:11px;top:237px;width:3px;height:1px;background:#000"></div><div style="left:11px;top:243px;width:3px;height:1px;background:#000"></div><div style="left:9px;top:249px;width:5px;height:1px;background:#000"></div><div style="left:11px;top:254px;width:3px;height:1px;background:#000"></div><div style="left:11px;top:260px;width:3px;height:1px;background:#000"></div><div style="left:11px;top:266px;width:3px;height:1px;background:#000"></div><div style="left:11px;top:271px;width:3px;height:1px;background:#000"></div><div style="left:0px;top:277px;width:14px;height:1px;background:#000"></div><div class="t" style="left:1px;top:280px;font-size:9px;line-height:7px;width:6px;word-break:break-all;white-space:normal;color:#000">6</div><div style="left:11px;top:283px;width:3px;height:1px;background:#000"></div><div style="left:11px;top:288px;width:3px;height:1px;background:#000"></div><div style="left:11px;top:294px;width:3px;height:1px;background:#000"></div><div style="left:11px;top:300px;width:3px;height:1px;background:#000"></div><div style="left:9px;top:305px;width:5px;height:1px;background:#000"></div><div style="left:11px;top:311px;width:3px;height:1px;background:#000"></div><div style="left:11px;top:317px;width:3px;height:1px;background:#000"></div><div style="left:11px;top:322px;width:3px;height:1px;background:#000"></div><div style="left:11px;top:328px;width:3px;height:1px;background:#000"></div><div style="left:0px;top:334px;width:14px;height:1px;background:#000"></div><div class="t" style="left:1px;top:337px;font-size:9px;line-height:7px;width:6px;word-break:break-all;white-space:normal;color:#000">8</div><div style="left:11px;top:339px;width:3px;height:1px;background:#000"></div><div style="left:11px;top:345px;width:3px;height:1px;background:#000"></div><div style="left:11px;top:351px;width:3px;height:1px;background:#000"></div><div style="left:11px;top:356px;width:3px;height:1px;background:#000"></div><div style="left:9px;top:362px;width:5px;height:1px;background:#000"></div><div style="left:11px;top:368px;width:3px;height:1px;background:#000"></div><div style="left:11px;top:373px;width:3px;height:1px;background:#000"></div><div style="left:11px;top:379px;width:3px;height:1px;background:#000"></div><div style="left:11px;top:385px;width:3px;height:1px;background:#000"></div><div style="left:0px;top:390px;width:14px;height:1px;background:#000"></div><div class="t" style="left:1px;top:393px;font-size:9px;line-height:7px;width:6px;word-break:break-all;white-space:normal;color:#000">10</div><div style="left:11px;top:396px;width:3px;height:1px;background:#000"></div><div style="left:11px;top:402px;width:3px;height:1px;background:#000"></div><div style="left:11px;top:407px;width:3px;height:1px;background:#000"></div><div style="left:11px;top:413px;width:3px;height:1px;background:#000"></div><div style="left:9px;top:419px;width:5px;height:1px;background:#000"></div><div style="left:11px;top:424px;width:3px;height:1px;background:#000"></div><div style="left:11px;top:430px;width:3px;height:1px;background:#000"></div><div style="left:11px;top:436px;width:3px;height:1px;background:#000"></div><div style="left:11px;top:441px;width:3px;height:1px;background:#000"></div><div style="left:0px;top:447px;width:14px;height:1px;background:#000"></div><div class="t" style="left:1px;top:450px;font-size:9px;line-height:7px;width:6px;word-break:break-all;white-space:normal;color:#000">12</div><div style="left:11px;top:453px;width:3px;height:1px;background:#000"></div><div style="left:11px;top:458px;width:3px;height:1px;background:#000"></div><div style="left:11px;top:464px;width:3px;height:1px;background:#000"></div><div style="left:11px;top:470px;width:3px;height:1px;background:#000"></div><div style="left:9px;top:476px;width:5px;height:1px;background:#000"></div><div style="left:11px;top:481px;width:3px;height:1px;background:#000"></div><div style="left:11px;top:487px;width:3px;height:1px;background:#000"></div><div style="left:11px;top:493px;width:3px;height:1px;background:#000"></div><div style="left:11px;top:498px;width:3px;height:1px;background:#000"></div><div style="left:0px;top:504px;width:14px;height:1px;background:#000"></div><div class="t" style="left:1px;top:507px;font-size:9px;line-height:7px;width:6px;word-break:break-all;white-space:normal;color:#000">14</div><div style="left:11px;top:510px;width:3px;height:1px;background:#000"></div><div style="left:11px;top:515px;width:3px;height:1px;background:#000"></div><div style="left:11px;top:521px;width:3px;height:1px;background:#000"></div><div style="left:11px;top:527px;width:3px;height:1px;background:#000"></div><div style="left:9px;top:532px;width:5px;height:1px;background:#000"></div><div style="left:11px;top:538px;width:3px;height:1px;background:#000"></div><div style="left:11px;top:544px;width:3px;height:1px;background:#000"></div><div style="left:11px;top:549px;width:3px;height:1px;background:#000"></div><div style="left:11px;top:555px;width:3px;height:1px;background:#000"></div><div style="left:14px;top:0px;width:1px;height:554px;background:#000"></div></div>
<div style="left:64px;top:111px;width:14px;height:14px;background:#fff"></div>
<div style="left:78px;top:111px;width:1px;height:15px;background:#9a9a9a"></div>
<div style="left:64px;top:125px;width:15px;height:1px;background:#9a9a9a"></div>
<div style="left:74px;top:112px;width:1px;height:13px;background-image:linear-gradient(#000 50%,transparent 50%);background-size:1px 2px"></div>
<div style="left:65px;top:121px;width:13px;height:1px;background-image:linear-gradient(90deg,#000 50%,transparent 50%);background-size:2px 1px"></div>
<div style="left:73px;top:120px;width:3px;height:3px;background:#fff;border:1px solid #000;border-radius:50%"></div>
<div style="left:184px;top:233px;width:454px;height:340px;background:#0ba0c0;box-shadow:0 3px 3px rgba(0,0,0,.4),1px 1px 2px rgba(0,0,0,.25)"></div>
<svg style="left:0;top:0" width="1024" height="700" viewBox="0 0 1024 700">
<path fill="#e1084f" d="M411.5 347 C428 316 452 296.5 486 296.5 C530 296.5 562.5 335 562.5 380 C562.5 413.2 538.3 434 513.8 448.4 C480.8 467.8 429.2 504.9 411.5 531.5 C393.8 504.9 342.2 467.8 309.2 448.4 C284.7 434 259.7 413.2 259.7 377 C259.7 330 292 296 335 296 C370 296 395 316 411.5 347 Z"/>
<line x1="604.6" y1="263.4" x2="497" y2="345" stroke="#f7a214" stroke-width="4"/>
<path fill="#f7a214" d="M486.6 353.4 L496.5 334 L497 345.5 L508.3 349.3 Z"/>
</svg>
<div style="left:760px;top:103px;width:35px;height:295px;background:#d6d6d6"></div>
<div style="left:760px;top:398px;width:35px;height:297px;background:#646464"></div>
<div style="left:795px;top:103px;width:1px;height:295px;background:#3c3c3c"></div>
<div style="left:796px;top:103px;width:223px;height:592px;background:#d6d6d6;border-left:1px solid #eeeeee"></div>
<div style="left:1019px;top:56px;width:1px;height:640px;background:#4a4a4a"></div>
<svg style="left:7px;top:94px" width="10" height="6"><path d="M4 0 V6 L0.5 3 Z M8.5 0 V6 L5 3 Z" fill="#d8d8d8"/></svg>
<svg style="left:784px;top:94px" width="10" height="6"><path d="M4 0 V6 L0.5 3 Z M8.5 0 V6 L5 3 Z" fill="#d8d8d8"/></svg>
<svg style="left:1008px;top:94px" width="10" height="6"><path d="M0.5 0 V6 L4 3 Z M5 0 V6 L8.5 3 Z" fill="#d8d8d8"/></svg>
<div style="left:760px;top:146px;width:35px;height:1px;background:#4a4a4a"></div>
<div style="left:760px;top:145px;width:35px;height:1px;background:#eeeeee"></div>
<div style="left:761px;top:147px;width:34px;height:1px;background:#eeeeee"></div>
<svg style="left:764px;top:107px" width="28" height="4"><defs><pattern id="p764_107" width="2" height="2" patternUnits="userSpaceOnUse"><rect width="1" height="1" fill="#9a9a9a"/></pattern></defs><rect width="28" height="4" fill="url(#p764_107)"/></svg>
<div style="left:760px;top:220px;width:35px;height:1px;background:#4a4a4a"></div>
<div style="left:760px;top:219px;width:35px;height:1px;background:#eeeeee"></div>
<div style="left:761px;top:221px;width:34px;height:1px;background:#eeeeee"></div>
<svg style="left:764px;top:151px" width="28" height="4"><defs><pattern id="p764_151" width="2" height="2" patternUnits="userSpaceOnUse"><rect width="1" height="1" fill="#9a9a9a"/></pattern></defs><rect width="28" height="4" fill="url(#p764_151)"/></svg>
<div style="left:760px;top:324px;width:35px;height:1px;background:#4a4a4a"></div>
<div style="left:760px;top:323px;width:35px;height:1px;background:#eeeeee"></div>
<div style="left:761px;top:325px;width:34px;height:1px;background:#eeeeee"></div>
<svg style="left:764px;top:225px" width="28" height="4"><defs><pattern id="p764_225" width="2" height="2" patternUnits="userSpaceOnUse"><rect width="1" height="1" fill="#9a9a9a"/></pattern></defs><rect width="28" height="4" fill="url(#p764_225)"/></svg>
<div style="left:760px;top:397px;width:35px;height:1px;background:#4a4a4a"></div>
<div style="left:760px;top:396px;width:35px;height:1px;background:#eeeeee"></div>
<svg style="left:764px;top:329px" width="28" height="4"><defs><pattern id="p764_329" width="2" height="2" patternUnits="userSpaceOnUse"><rect width="1" height="1" fill="#9a9a9a"/></pattern></defs><rect width="28" height="4" fill="url(#p764_329)"/></svg>
<svg style="left:760px;top:103px" width="35" height="295" viewBox="760 103 35 295">
<defs><linearGradient id="ig" x1="0" y1="0" x2="1" y2="1"><stop offset="0" stop-color="#f0f0f0"/><stop offset="1" stop-color="#a8a8a8"/></linearGradient></defs>
<path d="M769.5 136.5 V121.5 H775 L777 123.5 H785.5 V136.5 Z" fill="url(#ig)" stroke="#222" stroke-width="1.2"/>
<text x="771" y="133.5" font-family="Liberation Sans" font-size="9" fill="#111" letter-spacing="-0.4">Mb</text>
<rect x="771.5" y="164.5" width="4" height="4" fill="#fff" stroke="#333"/><rect x="771.5" y="170.5" width="4" height="4" fill="#fff" stroke="#333"/><rect x="771" y="176" width="5" height="5" fill="#555"/>
<path d="M779 166 L781 163.5 C786 164 786.5 172 780 178.5" fill="none" stroke="#333" stroke-width="1.8"/>
<rect x="769.5" y="196.5" width="16" height="12" fill="url(#ig)" stroke="#222"/><path d="M773 199 L782 202.5 L773 206 Z" fill="#333"/>
<text x="771" y="254" font-family="Liberation Sans" font-size="16" fill="#3a3a3a">A</text><rect x="783" y="238" width="1.2" height="17" fill="#111"/>
<path d="M779 270.5 V284 M781.5 270.5 V284 M782.5 270.5 H776 C772 270.5 772 277 776 277 H779" fill="none" stroke="#333" stroke-width="1.6"/><circle cx="776" cy="274" r="3.2" fill="#333"/>
<path d="M772 301 V310 M774.5 313 H781 M775 299.5 H779 M777 297.5 V301.5 M782.5 305 V308 M781 311 L782.5 309.5 L784 311 M782.5 309.5 V315" fill="none" stroke="#111" stroke-width="1.6"/>
<rect x="770.5" y="341.5" width="15" height="16" fill="url(#ig)" stroke="#222"/><path d="M773 345 H779 M773 348 H779 M773 351 H783" stroke="#333"/><rect x="780" y="344" width="3.5" height="5" fill="#555"/><rect x="772" y="353" width="11.5" height="3" fill="#666"/>
<rect x="768.5" y="371.5" width="11" height="13" fill="#fff" stroke="#333"/><path d="M772.5 375.5 H784.5 V386 L781.5 389 H772.5 Z" fill="url(#ig)" stroke="#333"/><path d="M775 379 H782 M775 381.5 H782 M775 384 H780" stroke="#444"/>
</svg>
<div style="left:796px;top:102px;width:223px;height:1px;background:#111"></div>
<div style="left:796px;top:103px;width:223px;height:16px;background:linear-gradient(#a8a8a8,#8c8c8c);border-bottom:1px solid #5a5a5a"></div><div style="left:796px;top:103px;width:48px;height:17px;background:linear-gradient(#f2f2f2,#d6d6d6);border-left:1px solid #f4f4f4"></div><div class="t" style="left:803px;top:107.70px;font-size:10px;font-weight:bold;color:#2a2a35;letter-spacing:-0.3px">COLOR</div><div style="left:844px;top:103px;width:1px;height:16px;background:#5c5c5c"></div><div class="t" style="left:851px;top:107.70px;font-size:10px;font-weight:bold;color:#2a2a35;letter-spacing:-0.25px">SWATCHES</div><div style="left:911px;top:103px;width:1px;height:16px;background:#5c5c5c"></div><div class="t" style="left:918.5px;top:107.70px;font-size:10px;font-weight:bold;color:#2a2a35;letter-spacing:-0.8px">STYLES</div><div style="left:960px;top:103px;width:1px;height:16px;background:#5c5c5c"></div><svg style="left:1000px;top:107px" width="16" height="9"><path d="M1 3 H6 L3.5 6 Z" fill="#222"/><path d="M7 1.5 H15 M7 3.5 H15 M7 5.5 H15 M7 7.5 H15" stroke="#1a1a1a" stroke-width="1"/></svg>
<div style="left:816px;top:141px;width:20px;height:20px;background:#fff;border:1px solid #9c9c9c"></div>
<div style="left:804px;top:129px;width:20px;height:20px;background:#0ba0c0;border:1px solid #111;box-shadow:inset 0 0 0 1px #f4f4f4"></div>
<div class="t" style="left:840px;top:129.70px;font-size:10px;font-weight:bold;color:#222">R</div>
<div style="left:853px;top:131px;width:101px;height:6px;background:linear-gradient(90deg,#00a0c0,#ffa0c0);border:1px solid #8a8a8a"></div>
<svg style="left:852.5px;top:137px" width="10" height="8"><path d="M5 0.8 L9 6.8 H1 Z" fill="#fff" stroke="#5a5a5a" stroke-width="1"/><path d="M1.8 6 H8.2" stroke="#2aa02a" stroke-width="1.6"/></svg>
<div class="t" style="left:840px;top:152.70px;font-size:10px;font-weight:bold;color:#222">G</div>
<div style="left:853px;top:154px;width:101px;height:6px;background:linear-gradient(90deg,#0b00c0,#0bffc0);border:1px solid #8a8a8a"></div>
<svg style="left:911.5px;top:160px" width="10" height="8"><path d="M5 0.8 L9 6.8 H1 Z" fill="#fff" stroke="#5a5a5a" stroke-width="1"/><path d="M1.8 6 H8.2" stroke="#2aa02a" stroke-width="1.6"/></svg>
<div class="t" style="left:840px;top:175.70px;font-size:10px;font-weight:bold;color:#222">B</div>
<div style="left:853px;top:177px;width:101px;height:6px;background:linear-gradient(90deg,#0ba000,#0ba0ff);border:1px solid #8a8a8a"></div>
<svg style="left:923.5px;top:183px" width="10" height="8"><path d="M5 0.8 L9 6.8 H1 Z" fill="#fff" stroke="#5a5a5a" stroke-width="1"/><path d="M1.8 6 H8.2" stroke="#2aa02a" stroke-width="1.6"/></svg>
<div style="left:959px;top:126px;width:31px;height:18px;background:#fff;border:1px solid #e4e4e4;border-top-color:#c4c4c4"></div>
<div class="t" style="left:965px;top:131.70px;font-size:10px;color:#111">11</div>
<div style="left:959px;top:149px;width:31px;height:18px;background:#fff;border:1px solid #e4e4e4;border-top-color:#c4c4c4"></div>
<div class="t" style="left:965px;top:154.70px;font-size:10px;color:#111">160</div>
<div style="left:959px;top:172px;width:31px;height:18px;background:#fff;border:1px solid #e4e4e4;border-top-color:#c4c4c4"></div>
<div class="t" style="left:965px;top:177.70px;font-size:10px;color:#111">192</div>
<div style="left:801px;top:198px;width:199px;height:16px;background:#ccc;border:1px solid #c8c8c8"></div>
<div style="left:802px;top:199px;width:190px;height:15px;background:linear-gradient(#ffffff 0%,rgba(255,255,255,0) 55%,rgba(0,0,0,0) 55%,#000 100%),linear-gradient(90deg,#ff0000,#ffe800 19%,#10a040 35%,#10b8f0 53%,#1a2890 67%,#e0007a 86%,#ff0000)"></div>
<div style="left:992px;top:199px;width:8px;height:7px;background:#fff"></div>
<div style="left:992px;top:206px;width:8px;height:8px;background:#000"></div>
<div style="left:796px;top:217px;width:223px;height:4px;background:#2e2e2e;border-top:1px solid #666"></div>
<div style="left:796px;top:221px;width:223px;height:16px;background:linear-gradient(#a8a8a8,#8c8c8c);border-bottom:1px solid #5a5a5a"></div><div style="left:796px;top:221px;width:86px;height:17px;background:linear-gradient(#f2f2f2,#d6d6d6);border-left:1px solid #f4f4f4"></div><div class="t" style="left:803px;top:225.70px;font-size:10px;font-weight:bold;color:#2a2a35;letter-spacing:-0.3px">ADJUSTMENTS</div><div style="left:882px;top:221px;width:1px;height:16px;background:#5c5c5c"></div><div class="t" style="left:889.5px;top:225.70px;font-size:10px;font-weight:bold;color:#2a2a35;letter-spacing:-0.2px">MASKS</div><div style="left:931px;top:221px;width:1px;height:16px;background:#5c5c5c"></div><svg style="left:1000px;top:225px" width="16" height="9"><path d="M1 3 H6 L3.5 6 Z" fill="#222"/><path d="M7 1.5 H15 M7 3.5 H15 M7 5.5 H15 M7 7.5 H15" stroke="#1a1a1a" stroke-width="1"/></svg>
<div style="left:797px;top:237px;width:222px;height:4px;background:#d6d6d6"></div>
<div style="left:796px;top:241px;width:223px;height:3px;background:#2e2e2e"></div>
<div style="left:796px;top:244px;width:223px;height:16px;background:linear-gradient(#a8a8a8,#8c8c8c);border-bottom:1px solid #5a5a5a"></div><div style="left:796px;top:244px;width:50px;height:17px;background:linear-gradient(#f2f2f2,#d6d6d6);border-left:1px solid #f4f4f4"></div><div class="t" style="left:803px;top:248.70px;font-size:10px;font-weight:bold;color:#2a2a35;letter-spacing:-0.7px">LAYERS</div><div style="left:846px;top:244px;width:1px;height:16px;background:#5c5c5c"></div><div class="t" style="left:853.5px;top:248.70px;font-size:10px;font-weight:bold;color:#2a2a35;letter-spacing:-0.45px">CHANNELS</div><div style="left:913px;top:244px;width:1px;height:16px;background:#5c5c5c"></div><div class="t" style="left:921.5px;top:248.70px;font-size:10px;font-weight:bold;color:#2a2a35;letter-spacing:-0.15px">PATHS</div><div style="left:960px;top:244px;width:1px;height:16px;background:#5c5c5c"></div><svg style="left:1000px;top:248px" width="16" height="9"><path d="M1 3 H6 L3.5 6 Z" fill="#222"/><path d="M7 1.5 H15 M7 3.5 H15 M7 5.5 H15 M7 7.5 H15" stroke="#1a1a1a" stroke-width="1"/></svg>
<div style="left:801px;top:265px;width:116px;height:18px;background:#fff;border:1px solid #c4c4c4;box-shadow:inset 0 0 0 1px #f4f4f4"></div>
<div class="t" style="left:805px;top:268.70px;font-size:10px;color:#4a5a70">Normal</div>
<div style="left:900px;top:267px;width:1px;height:14px;background:#e0e0e0"></div>
<svg style="left:903px;top:273px" width="8" height="4.5"><path d="M0 0 H8 L4.0 4.5 Z" fill="#a0a0a0"/></svg>
<div class="t" style="left:920px;top:269.00px;font-size:10px;color:#a4a4a4;letter-spacing:0.2px">Opacity:</div>
<div style="left:961px;top:264px;width:54px;height:18px;background:#d8d8d8;border:1px solid #a8a8a8"></div>
<div style="left:962px;top:265px;width:36px;height:16px;background:#dcdcdc;border:1px solid #fafafa"></div>
<div style="left:998px;top:265px;width:16px;height:16px;background:#ececec;border-left:1px solid #b0b0b0"></div>
<svg style="left:1003px;top:269px" width="6" height="8"><path d="M1 1 L4.5 4 L1 7 Z" fill="#777"/></svg>
<div class="t" style="left:967px;top:269.70px;font-size:10px;color:#6a6a6a">100%</div>
<div style="left:961px;top:290px;width:54px;height:18px;background:#d8d8d8;border:1px solid #a8a8a8"></div>
<div style="left:962px;top:291px;width:36px;height:16px;background:#dcdcdc;border:1px solid #fafafa"></div>
<div style="left:998px;top:291px;width:16px;height:16px;background:#ececec;border-left:1px solid #b0b0b0"></div>
<svg style="left:1003px;top:295px" width="6" height="8"><path d="M1 1 L4.5 4 L1 7 Z" fill="#777"/></svg>
<div class="t" style="left:967px;top:295.70px;font-size:10px;color:#6a6a6a">100%</div>
<div style="left:798px;top:285px;width:221px;height:1px;background:#a4a4a4"></div>
<div style="left:798px;top:286px;width:221px;height:1px;background:#ececec"></div>
<div class="t" style="left:804px;top:295.00px;font-size:10px;color:#a4a4a4;letter-spacing:0.3px">Lock:</div>
<div class="t" style="left:943.5px;top:295.00px;font-size:10px;color:#a4a4a4">Fill:</div>
<svg style="left:834px;top:290px" width="70" height="18" viewBox="834 290 70 18">
<rect x="836.5" y="293.5" width="10" height="10" fill="#e8e8e8" stroke="#888"/><rect x="837" y="294" width="3" height="3" fill="#c0c0c0"/><rect x="843" y="294" width="3" height="3" fill="#c0c0c0"/><rect x="840" y="297" width="3" height="3" fill="#c0c0c0"/><rect x="837" y="300" width="3" height="3" fill="#c0c0c0"/><rect x="843" y="300" width="3" height="3" fill="#c0c0c0"/>
<path d="M866 293 L859 300" stroke="#8a8a8a" stroke-width="1.5"/><path d="M860.5 299 C857 299 855 301 853 305 C857 305 860 304 861.5 301 Z" fill="#777"/>
<path d="M877.5 293 V305 M871.5 299 H883.5" stroke="#555" stroke-width="1.2"/><path d="M877.5 292 L875.5 294.5 H879.5 Z M877.5 306 L875.5 303.5 H879.5 Z M870.5 299 L873 297 V301 Z M884.5 299 L882 297 V301 Z" fill="#555"/>
<path d="M891.5 298 V296 C891.5 292.5 898.5 292.5 898.5 296 V298" fill="none" stroke="#666" stroke-width="1.4"/><rect x="890" y="298" width="10" height="7" fill="#777"/>
</svg>
<div style="left:798px;top:311px;width:221px;height:1px;background:#a4a4a4"></div>
<div style="left:821px;top:312px;width:181px;height:39px;background:#3c99f6"></div>
<div style="left:798px;top:351px;width:204px;height:1px;background:#a4a4a4"></div>
<div style="left:798px;top:389px;width:204px;height:1px;background:#a4a4a4"></div>
<div style="left:798px;top:422px;width:204px;height:1px;background:#a4a4a4"></div>
<div style="left:820px;top:312px;width:1px;height:110px;background:#a4a4a4"></div>
<div style="left:1002px;top:312px;width:15px;height:365px;background:linear-gradient(90deg,#f6f6f6,#e6e6e6)"></div>
<svg style="left:1003px;top:317px" width="13" height="8"><path d="M2 6.5 L6.5 2 L11 6.5 Z" fill="#a0a0a0"/></svg>
<svg style="left:1003px;top:666px" width="13" height="8"><path d="M2 1.5 L6.5 6 L11 1.5 Z" fill="#9a9a9a"/></svg>
<div style="left:801px;top:322px;width:16px;height:16px;border-top:1px solid #9a9a9a;border-left:1px solid #9a9a9a;border-bottom:1px solid #ececec;border-right:1px solid #ececec"></div>
<div style="left:801px;top:364px;width:16px;height:16px;border-top:1px solid #9a9a9a;border-left:1px solid #9a9a9a;border-bottom:1px solid #ececec;border-right:1px solid #ececec"></div>
<div style="left:801px;top:397px;width:16px;height:16px;border-top:1px solid #9a9a9a;border-left:1px solid #9a9a9a;border-bottom:1px solid #ececec;border-right:1px solid #ececec"></div>
<svg style="left:802px;top:364px" width="15" height="10"><path d="M2 5 C5 1 10 1 13 5 C10 9 5 9 2 5 Z" fill="#fff" stroke="#111" stroke-width="1.3"/><circle cx="7.5" cy="5" r="2.6" fill="#111"/><circle cx="6.8" cy="4.3" r="0.8" fill="#fff"/><path d="M2.5 3 C6 -0.5 10 -0.5 13 3" fill="none" stroke="#111" stroke-width="0.9"/></svg>
<svg style="left:802px;top:399px" width="15" height="10"><path d="M2 5 C5 1 10 1 13 5 C10 9 5 9 2 5 Z" fill="#fff" stroke="#111" stroke-width="1.3"/><circle cx="7.5" cy="5" r="2.6" fill="#111"/><circle cx="6.8" cy="4.3" r="0.8" fill="#fff"/><path d="M2.5 3 C6 -0.5 10 -0.5 13 3" fill="none" stroke="#111" stroke-width="0.9"/></svg>
<div style="left:799px;top:318px;width:22px;height:29px;border:2px solid #c40000"></div>
<div style="left:798px;top:362px;width:23px;height:24px;border:2px solid #c40000"></div>
<div style="left:823px;top:313px;width:35px;height:36px;background:#fff;border:1px solid #111"></div>
<div style="left:825px;top:315px;width:31px;height:32px;border:1px solid #111"></div>
<div class="t" style="left:832.5px;top:320.90px;font-size:20px;font-family:'Liberation Serif',serif;color:#3a3a3a;text-shadow:0.3px 0 0 #3a3a3a">T</div>
<div style="left:822px;top:312px;width:5px;height:2px;background:#111"></div>
<div style="left:853px;top:312px;width:5px;height:2px;background:#111"></div>
<div style="left:822px;top:347px;width:5px;height:2px;background:#111"></div>
<div style="left:853px;top:347px;width:5px;height:2px;background:#111"></div>
<svg style="left:860px;top:320px" width="54" height="22" viewBox="860 320 54 22"><g transform="translate(669.99 241.97999999999996) scale(1.06 0.9)" fill="none" stroke="#fff" stroke-width="1.7" stroke-linecap="round"><path d="M183.9 102.3 C183.4 107.2 189.6 107.6 189.8 102.3"/><path d="M191.5 97 V103.8"/><path d="M191.5 103.8 H203.5"/><path d="M205.2 103.8 H211.6"/><path d="M195.3 101.6 V103.8"/><path d="M197.4 101.6 V103.8"/><path d="M199.5 101.6 V103.8"/><path d="M202.6 101.6 V103.8"/><path d="M205.8 100.8 C208.2 101.2 208.8 103.8 206.2 103.8"/><path d="M211.6 101.6 V103.8"/><path d="M213.9 97 V103.8"/><path d="M218.6 103.6 C218.8 101 216 100.6 216 102.6 C216 104.2 218.6 104.2 218.6 103.6 C218.6 106.2 216.6 107.2 214.8 107.2"/><path d="M218.8 103.8 H223.4 V101.8"/></g><g transform="translate(669.99 241.97999999999996) scale(1.06 0.9)" fill="#fff"><rect x="185.45" y="99.45" width="1.5" height="1.5"/><rect x="195.55" y="98.85" width="1.5" height="1.5"/><rect x="197.75" y="98.85" width="1.5" height="1.5"/><rect x="196.65" y="97.15" width="1.5" height="1.5"/><rect x="200.85" y="105.85" width="1.5" height="1.5"/><rect x="202.85" y="105.85" width="1.5" height="1.5"/><rect x="210.85" y="98.45" width="1.5" height="1.5"/><rect x="222.15" y="98.65" width="1.5" height="1.5"/></g></svg>
<div style="left:824px;top:354px;width:32px;height:31px;background:#fff;border:1px solid #111"></div>
<div style="left:825px;top:355px;width:30px;height:22px;background:#e1084f"></div>
<div style="left:828px;top:379px;width:24px;height:1px;background:#111"></div>
<svg style="left:837px;top:380px" width="8" height="5"><path d="M0.5 4 L4 0.5 L7.5 4 Z" fill="#111"/></svg>
<svg style="left:857px;top:362px" width="10" height="16"><rect x="2" y="1" width="5" height="7" rx="2.5" fill="#f0f0f0" stroke="#555" stroke-width="1.1"/><rect x="2" y="7" width="5" height="7" rx="2.5" fill="#e0e0e0" stroke="#555" stroke-width="1.1"/><path d="M4.5 4 V11" stroke="#555"/></svg>
<div style="left:871px;top:358px;width:33px;height:25px;background:#808080;border:1px solid #111"></div>
<svg style="left:876px;top:361px" width="22" height="19" viewBox="0 0 22 19"><path d="M11 17 L3 10 C0 7 1 2.5 5 2 C8 1.5 10 3.5 11 5 C12 3.5 14 1.5 17 2 C21 2.5 22 7 19 10 Z" fill="#fff" stroke="#333" stroke-width="0.8"/></svg>
<div class="t" style="left:911px;top:368.00px;font-size:10px;color:#111">Shape 1</div>
<div style="left:824px;top:393px;width:32px;height:25px;background:#0ba0c0;border:1px solid #111"></div>
<div class="t" style="left:865px;top:401.70px;font-size:10px;font-style:italic;color:#111">Background</div>
<svg style="left:976px;top:400px" width="10" height="12"><path d="M2.5 5 V3.5 C2.5 0.5 7.5 0.5 7.5 3.5 V5" fill="none" stroke="#333" stroke-width="1.2"/><rect x="1.5" y="5" width="7" height="6" fill="#d8d8d8" stroke="#333" stroke-width="1"/></svg>
<div style="left:798px;top:677px;width:221px;height:1px;background:#8a8a8a"></div>
<svg style="left:810px;top:677px" width="200" height="18" viewBox="810 677 200 18">
<rect x="818" y="681.5" width="8" height="6" rx="3" fill="none" stroke="#555" stroke-width="1.3"/><rect x="826" y="681.5" width="8" height="6" rx="3" fill="none" stroke="#555" stroke-width="1.3"/><path d="M823 684.5 H829" stroke="#555" stroke-width="1.3"/>
<text x="848" y="690" font-family="Liberation Serif" font-style="italic" font-weight="bold" font-size="13" fill="#333">fx</text><path d="M861 688 H865 L863 690.5 Z" fill="#111"/>
<rect x="874.5" y="679.5" width="13" height="11" fill="#a8a8a8" stroke="#111"/><circle cx="881" cy="685" r="3.6" fill="#fff" stroke="#333" stroke-width="0.6"/>
<circle cx="908.5" cy="685" r="5.8" fill="#eee" stroke="#444" stroke-width="1.2"/><path d="M904.4 689.1 A5.8 5.8 0 0 1 912.6 680.9 Z" fill="#333"/><path d="M914 688 H918 L916 690.5 Z" fill="#111"/>
<path d="M929.5 689.5 V681.5 H933 L934 682.5 H940.5 V689.5 Z" fill="#eaeaea" stroke="#333" stroke-width="1"/><path d="M929.5 690 H941" stroke="#111" stroke-width="1.5"/>
<rect x="957.5" y="680.5" width="9" height="9" fill="#f4f4f4" stroke="#999"/><path d="M959.5 684.5 H963 V688.5 H961 L959.5 687 Z" fill="#fff" stroke="#333" stroke-width="0.9"/><path d="M957.5 690.2 H967.2 V680.5" stroke="#111" stroke-width="1.5" fill="none"/>
<path d="M987 683.5 L987.8 690.5 H992.2 L993 683.5 Z" fill="#e8e8e8" stroke="#333" stroke-width="1.1"/><path d="M985.5 682.5 H994.5" stroke="#333" stroke-width="1.6"/><path d="M988 682 C988 679.8 992 679.8 992 682" fill="none" stroke="#333" stroke-width="1.1"/><path d="M989.3 684.5 V689.5 M990.7 684.5 V689.5" stroke="#555" stroke-width="0.8"/>
</svg>
</body></html>
